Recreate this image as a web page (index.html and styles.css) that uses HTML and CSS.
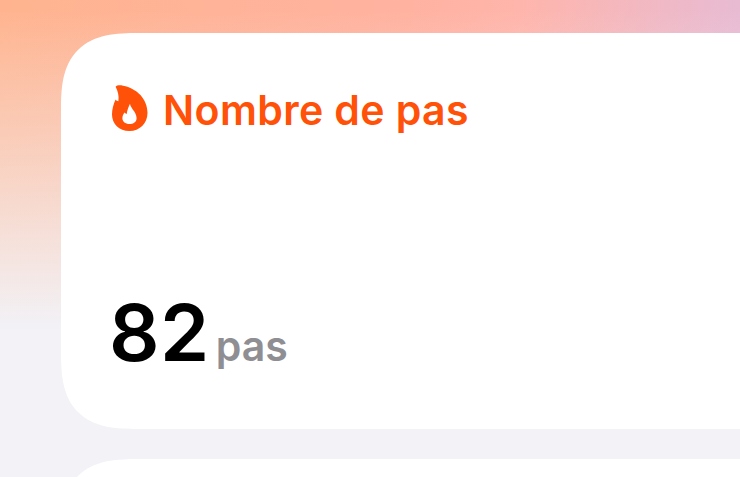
FILE: index.html
```html
<!DOCTYPE html>
<html lang="fr">
<head>
    <meta charset="UTF-8">
    <meta name="viewport" content="width=device-width, initial-scale=1.0">
    <title>Nombre de pas</title>
    <link rel="stylesheet" href="styles.css">
</head>
<body>
    <div class="list">
        <div class="card">
            <div class="card-title">
                <svg class="flame" viewBox="0 0 36 46" width="36" height="46">
                    <path fill-rule="evenodd" d="M3.6 1.8C5 0.2 8 0 11 0.8C25 3.5 35.5 14 35.5 28C35.5 38.5 27.5 46 17.5 46C7 46 0 38.5 0 29.5C0 24 1.5 19 3.6 14.5C4.3 15.5 5.2 16 6.4 16.3C7.2 11 5.8 6 3.6 1.8ZM18 18.8C18.5 23.5 24.6 27 24.6 33.2C24.6 36.8 21.4 39 17.4 39C13.4 39 10.4 36.6 10.4 33.2C10.4 31 11.2 29 12.6 27.4C13.2 28.2 13.8 28.7 14.7 29C15.2 25.6 16.4 22 18 18.8Z"/>
                </svg>
                <span class="title-text">Nombre de pas</span>
            </div>
            <div class="card-value">
                <span class="value-num">82</span>
                <span class="value-unit">pas</span>
            </div>
        </div>
        <div class="card"></div>
    </div>
</body>
</html>
```

FILE: styles.css
```css
html, body {
    height: 100%;
}
body {
    margin: 0;
    overflow: hidden;
    font-family: Inter, "Liberation Sans", sans-serif;
    background-color: #f2f2f7;
    background-image:
        linear-gradient(to bottom, rgba(242, 242, 247, 0) 10px, #f2f2f7 330px),
        linear-gradient(to right, #ffb48f, #ffb2a0 55%, #ffb5ab 70%, #e8bbd3);
}
.list {
    display: flex;
    flex-direction: column;
    gap: 30px;
    padding: 33px 0 0 61px;
    width: 800px;
}
.card {
    background-color: white;
    border-radius: 78px;
    corner-shape: superellipse(1.5);
    height: 396px;
    padding: 52px 48px 0 51px;
    box-sizing: border-box;
    display: flex;
    flex-direction: column;
    justify-content: space-between;
}
.card-title {
    display: flex;
    align-items: center;
    gap: 15px;
    color: #ff5108;
    font-size: 41px;
    font-weight: 600;
    letter-spacing: 0.4px;
    height: 46px;
}
.title-text {
    padding-top: 3px;
}
.flame {
    fill: #ff5108;
    flex: none;
}
.card-value {
    display: flex;
    align-items: baseline;
    gap: 6px;
    padding-bottom: 57px;
    margin-left: -3px;
}
.value-num {
    font-size: 79px;
    font-weight: 600;
    letter-spacing: 0.5px;
    line-height: 1;
    color: black;
}
.value-unit {
    font-size: 41px;
    font-weight: 600;
    color: #8e8e93;
}
```
